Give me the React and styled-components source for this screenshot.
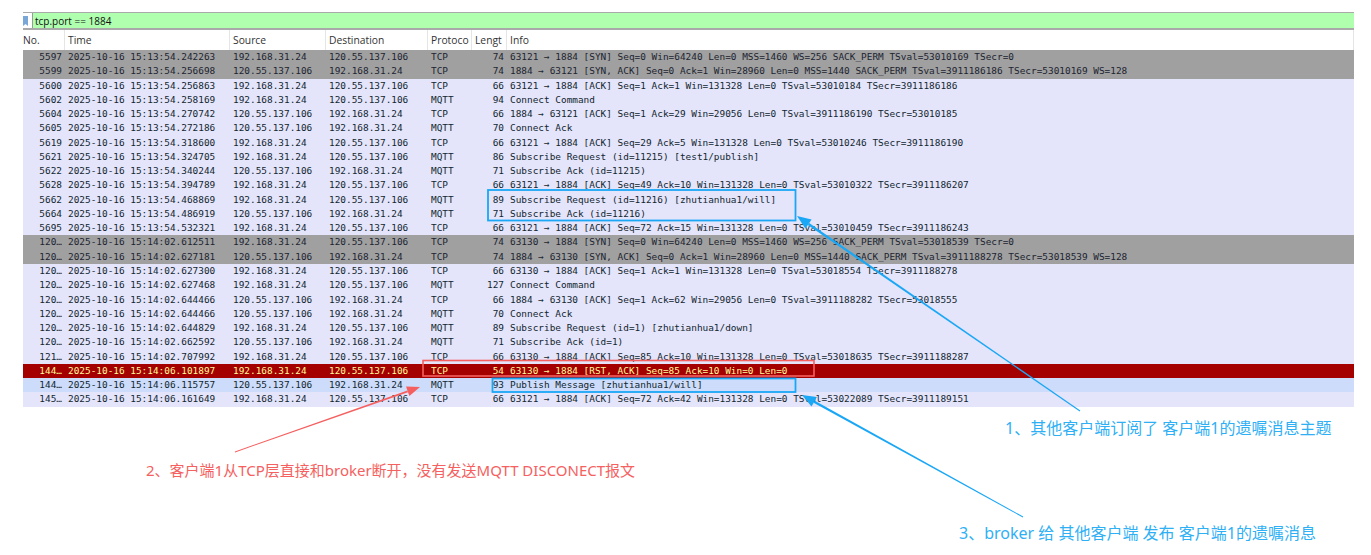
import React from 'react';
import styled, { createGlobalStyle } from 'styled-components';

const Global = createGlobalStyle`
  html, body { margin: 0; padding: 0; background: #fff; }
  #root { width: 1371px; height: 555px; overflow: hidden; }
`;

const Page = styled.div`
  position: relative;
  width: 1371px;
  height: 555px;
  padding: 12px 17px 0 23px;
  box-sizing: border-box;
  display: flex;
  flex-direction: column;
  overflow: hidden;
`;

const FilterBar = styled.div`
  height: 18px;
  display: flex;
  align-items: center;
  background: #afffaf;
  border-top: 1px solid #a9a9a9;
  border-bottom: 2px solid #a9a9a9;
  box-sizing: border-box;
`;

const FilterIcon = styled.div`
  width: 9px;
  height: 100%;
  background: #fff;
  border-right: 1px solid #9a9a9a;
  display: flex;
  align-items: center;
`;

const FilterText = styled.span`
  font: 10px "Open Sans", sans-serif;
  color: #111;
  margin-left: 2px;
`;

const Header = styled.div`
  display: grid;
  grid-template-columns: 42px 165px 96px 102px 44px 35px 1fr;
  height: 20px;
  background: #fff;
`;

const HeadCell = styled.div`
  font: 10.3px "Open Sans", sans-serif;
  color: #333;
  line-height: 21px;
  padding-left: ${(p) => p.$pad ?? 3}px;
  border-right: 1px solid #e5e5e5;
  overflow: hidden;
  white-space: nowrap;
`;

const Row = styled.div`
  display: grid;
  grid-template-columns: 42px 165px 96px 102px 44px 35px 1fr;
  height: 14.28px;
  font: 9.42px/14.28px "DejaVu Sans Mono", monospace;
  white-space: nowrap;
  overflow: hidden;
  background: ${(p) => p.$bg};
  color: ${(p) => p.$fg};
`;

const NumCell = styled.div`
  text-align: right;
  padding-right: 3px;
`;

const Cell = styled.div`
  padding-left: 3px;
  overflow: hidden;
`;

const Overlay = styled.svg`
  position: absolute;
  left: 0;
  top: 0;
  pointer-events: none;
`;

const Note = styled.div`
  position: absolute;
  left: ${(p) => p.$x}px;
  top: ${(p) => p.$y}px;
  font: ${(p) => p.$size}px "Noto Sans", "Noto Sans CJK SC", sans-serif;
  color: ${(p) => p.$color};
  white-space: nowrap;
  line-height: 20px;
`;

const OUT = ['192.168.31.24', '120.55.137.106'];
const IN = ['120.55.137.106', '192.168.31.24'];
const D1 = '2025-10-16 15:13:54.';
const D2 = '2025-10-16 15:14:02.';
const D3 = '2025-10-16 15:14:06.';

const rows = [
  ['5597', D1 + '242263', OUT, 'TCP', '74', '63121 → 1884 [SYN] Seq=0 Win=64240 Len=0 MSS=1460 WS=256 SACK_PERM TSval=53010169 TSecr=0', 'g'],
  ['5599', D1 + '256698', IN, 'TCP', '74', '1884 → 63121 [SYN, ACK] Seq=0 Ack=1 Win=28960 Len=0 MSS=1440 SACK_PERM TSval=3911186186 TSecr=53010169 WS=128', 'g'],
  ['5600', D1 + '256863', OUT, 'TCP', '66', '63121 → 1884 [ACK] Seq=1 Ack=1 Win=131328 Len=0 TSval=53010184 TSecr=3911186186'],
  ['5602', D1 + '258169', OUT, 'MQTT', '94', 'Connect Command'],
  ['5604', D1 + '270742', IN, 'TCP', '66', '1884 → 63121 [ACK] Seq=1 Ack=29 Win=29056 Len=0 TSval=3911186190 TSecr=53010185'],
  ['5605', D1 + '272186', IN, 'MQTT', '70', 'Connect Ack'],
  ['5619', D1 + '318600', OUT, 'TCP', '66', '63121 → 1884 [ACK] Seq=29 Ack=5 Win=131328 Len=0 TSval=53010246 TSecr=3911186190'],
  ['5621', D1 + '324705', OUT, 'MQTT', '86', 'Subscribe Request (id=11215) [test1/publish]'],
  ['5622', D1 + '340244', IN, 'MQTT', '71', 'Subscribe Ack (id=11215)'],
  ['5628', D1 + '394789', OUT, 'TCP', '66', '63121 → 1884 [ACK] Seq=49 Ack=10 Win=131328 Len=0 TSval=53010322 TSecr=3911186207'],
  ['5662', D1 + '468869', OUT, 'MQTT', '89', 'Subscribe Request (id=11216) [zhutianhua1/will]'],
  ['5664', D1 + '486919', IN, 'MQTT', '71', 'Subscribe Ack (id=11216)'],
  ['5695', D1 + '532321', OUT, 'TCP', '66', '63121 → 1884 [ACK] Seq=72 Ack=15 Win=131328 Len=0 TSval=53010459 TSecr=3911186243'],
  ['120…', D2 + '612511', OUT, 'TCP', '74', '63130 → 1884 [SYN] Seq=0 Win=64240 Len=0 MSS=1460 WS=256 SACK_PERM TSval=53018539 TSecr=0', 'g'],
  ['120…', D2 + '627181', IN, 'TCP', '74', '1884 → 63130 [SYN, ACK] Seq=0 Ack=1 Win=28960 Len=0 MSS=1440 SACK_PERM TSval=3911188278 TSecr=53018539 WS=128', 'g'],
  ['120…', D2 + '627300', OUT, 'TCP', '66', '63130 → 1884 [ACK] Seq=1 Ack=1 Win=131328 Len=0 TSval=53018554 TSecr=3911188278'],
  ['120…', D2 + '627468', OUT, 'MQTT', '127', 'Connect Command'],
  ['120…', D2 + '644466', IN, 'TCP', '66', '1884 → 63130 [ACK] Seq=1 Ack=62 Win=29056 Len=0 TSval=3911188282 TSecr=53018555'],
  ['120…', D2 + '644466', IN, 'MQTT', '70', 'Connect Ack'],
  ['120…', D2 + '644829', OUT, 'MQTT', '89', 'Subscribe Request (id=1) [zhutianhua1/down]'],
  ['120…', D2 + '662592', IN, 'MQTT', '71', 'Subscribe Ack (id=1)'],
  ['121…', D2 + '707992', OUT, 'TCP', '66', '63130 → 1884 [ACK] Seq=85 Ack=10 Win=131328 Len=0 TSval=53018635 TSecr=3911188287'],
  ['144…', D3 + '101897', OUT, 'TCP', '54', '63130 → 1884 [RST, ACK] Seq=85 Ack=10 Win=0 Len=0', 'r'],
  ['144…', D3 + '115757', IN, 'MQTT', '93', 'Publish Message [zhutianhua1/will]', 's'],
  ['145…', D3 + '161649', OUT, 'TCP', '66', '63121 → 1884 [ACK] Seq=72 Ack=42 Win=131328 Len=0 TSval=53022089 TSecr=3911189151'],
];

const palette = {
  g: ['#a0a0a0', '#1c2430'],
  r: ['#a40000', '#fffc9c'],
  s: ['#ccdcfa', '#12272e'],
  d: ['#e4e4fb', '#12272e'],
};

const BLUE = '#1aa7f5';
const RED = '#f55f5f';

export default function App() {
  return (
    <Page>
      <Global />
      <FilterBar>
        <FilterIcon>
          <svg width="6" height="12" viewBox="0 0 6 12"><path d="M0 1h5v10l-2.5-2L0 11z" fill="#7ba6d8" /></svg>
        </FilterIcon>
        <FilterText>tcp.port == 1884</FilterText>
      </FilterBar>
      <Header>
        <HeadCell $pad={0}>No.</HeadCell>
        <HeadCell>Time</HeadCell>
        <HeadCell>Source</HeadCell>
        <HeadCell>Destination</HeadCell>
        <HeadCell>Protoco</HeadCell>
        <HeadCell>Lengt</HeadCell>
        <HeadCell>Info</HeadCell>
      </Header>
      {rows.map((r, i) => {
        const [bg, fg] = palette[r[6] || 'd'];
        return (
          <Row key={i} $bg={bg} $fg={fg}>
            <NumCell>{r[0]}</NumCell>
            <Cell>{r[1]}</Cell>
            <Cell>{r[2][0]}</Cell>
            <Cell>{r[2][1]}</Cell>
            <Cell>{r[3]}</Cell>
            <NumCell>{r[4]}</NumCell>
            <Cell>{r[5]}</Cell>
          </Row>
        );
      })}
      <Overlay width="1371" height="555" viewBox="0 0 1371 555" fill="none">
        <rect x="488" y="190" width="307.5" height="30.5" stroke={BLUE} strokeWidth="1.8" />
        <rect x="492.5" y="378.5" width="303" height="13.5" stroke={BLUE} strokeWidth="1.8" />
        <rect x="423" y="360.5" width="391" height="15.5" stroke={RED} strokeWidth="1.6" />
        <path d="M1080.3 410.6L1079.7 411.4L807.8 225L809.2 223Z" fill={BLUE} />
        <path d="M797 216L811.6 219.5L805.4 228.5Z" fill={BLUE} />
        <path d="M1023.2 516.6L1022.8 517.4L813.6 402.8L814.8 400.8Z" fill={BLUE} />
        <path d="M802 395L816.9 397L811.5 406.6Z" fill={BLUE} />
        <path d="M235.1 452.4L234.9 451.6L407.4 390.4L408 392.2Z" fill={RED} />
        <path d="M420 387L409.4 396L406 386.6Z" fill={RED} />
      </Overlay>
      <Note $x={1005} $y={418} $size={16} $color="#2fb0f5">1、其他客户端订阅了 客户端1的遗嘱消息主题</Note>
      <Note $x={146} $y={460} $size={15} $color="#f56060">2、客户端1从TCP层直接和broker断开，没有发送MQTT DISCONECT报文</Note>
      <Note $x={959} $y={523} $size={16} $color="#2fb0f5">3、broker 给 其他客户端 发布 客户端1的遗嘱消息</Note>
    </Page>
  );
}
